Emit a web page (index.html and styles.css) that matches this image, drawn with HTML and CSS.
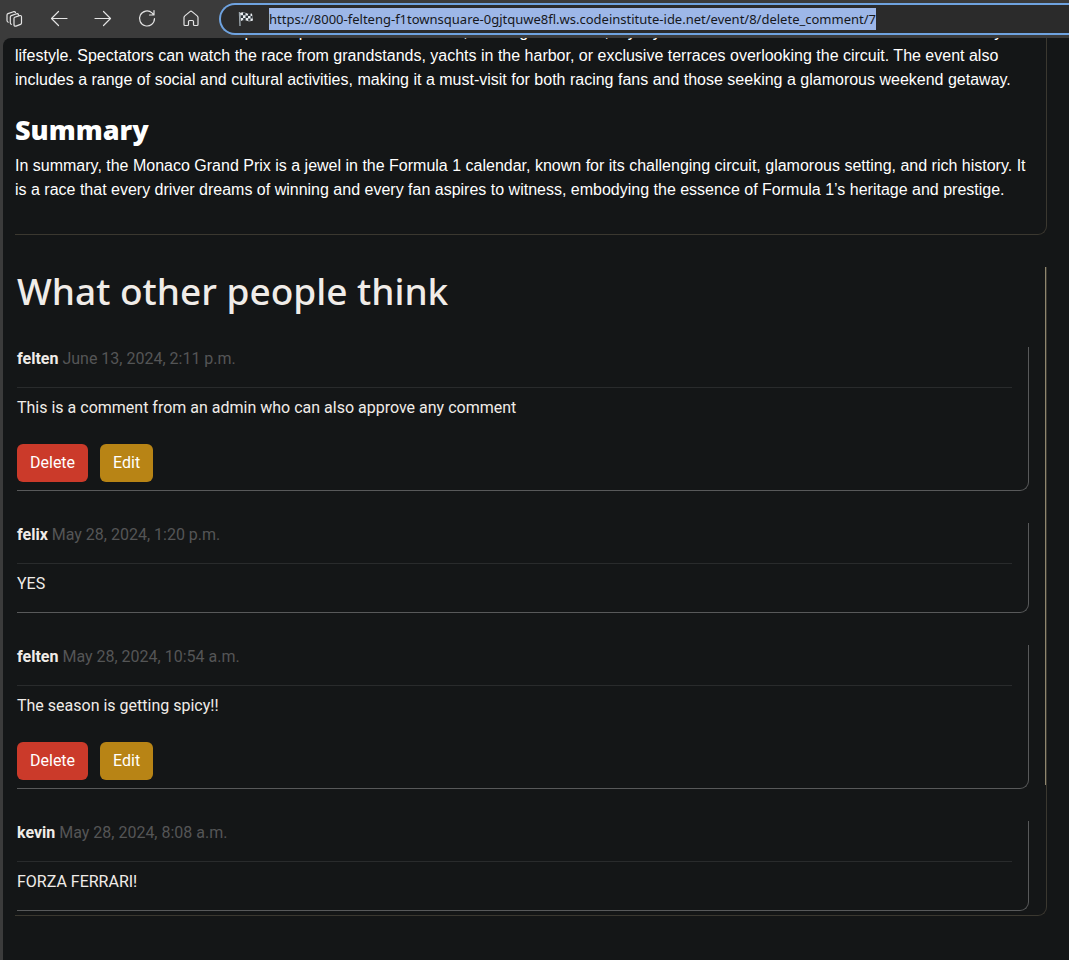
FILE: index.html
```html
<!DOCTYPE html>
<html lang="en">
<head>
<meta charset="utf-8">
<title>F1 Town Square</title>
<link rel="stylesheet" href="styles.css">
</head>
<body>
<header class="toolbar">
  <nav class="tools" aria-label="Browser">
    <button class="tool" type="button" aria-label="Workspaces"><svg viewBox="0 0 20 20"><path d="M9.700 8.300 14.500 6.600q2-.5 2 1.200v6.200q0 1-1 1.400l-4.500 1.700q-1.900.5-2-1.200V9.500q0-.9.700-1.200M6.300 15.400q-1-.4-1-1.600V8q0-1 1-1.400L11.500 4.800q1.500-.4 2 .900M3.200 13.200q-1.200-.5-1.200-1.700V6q0-1 1-1.400L8.500 2.700q1.500-.4 2 .8"/></svg></button>
    <button class="tool" type="button" aria-label="Back"><svg viewBox="0 0 20 20"><path d="M18 9.500H2.500M9.500 2.500l-7 7 7 7"/></svg></button>
    <button class="tool" type="button" aria-label="Forward"><svg viewBox="0 0 20 20"><path d="M2 9.500h15.500M10.500 2.500l7 7-7 7"/></svg></button>
    <button class="tool" type="button" aria-label="Reload"><svg viewBox="0 0 20 20"><path d="M17.500 9.500a7.500 7.500 0 1 1-2.500-5.600l1.500 1.600M17 1.500v4.500h-4.500"/></svg></button>
    <button class="tool" type="button" aria-label="Home"><svg viewBox="0 0 20 20"><path d="M3 8.500q0-1 .8-1.600L9 2.600q1-.8 2 0l5.200 4.300q.8.600.8 1.600v7q0 1-1 1h-2.500q-1 0-1-1v-3q0-1-1-1h-3q-1 0-1 1v3q0 1-1 1H4q-1 0-1-1z"/></svg></button>
  </nav>
  <div class="address">
    <svg class="flag" viewBox="0 0 16 16" aria-hidden="true"><path class="cloth" d="M2 2q3-1.500 6 0t6 .5l1 7q-3 1.500-6 .2T3 10z"/><path class="check" d="M5 1.400h2.500v2.800H5zM10 2.700h2.500v2.400H10zM2.800 4.300H5V7H2.800zM7.500 4.500H10V7H7.500zM12.500 5h2v2.400h-2zM5.200 7h2.500v2.300H5.200zM10.200 7.400h2.300v2.300h-2.300z"/><path class="pole" d="M1.500 1 2 15"/></svg>
    <input class="url" type="text" aria-label="Address" spellcheck="false" value="https://8000-felteng-f1townsquare-0gjtquwe8fl.ws.codeinstitute-ide.net/event/8/delete_comment/7">
  </div>
</header>
<main class="page">
  <article class="event">
    <p>The Monaco Grand Prix is an important part of the social scene, drawing celebrities, royalty and fans who come to share in the lavish luxury lifestyle. Spectators can watch the race from grandstands, yachts in the harbor, or exclusive terraces overlooking the circuit. The event also includes a range of social and cultural activities, making it a must-visit for both racing fans and those seeking a glamorous weekend getaway.</p>
    <h3 class="event-title">Summary</h3>
    <p>In summary, the Monaco Grand Prix is a jewel in the Formula 1 calendar, known for its challenging circuit, glamorous setting, and rich history. It is a race that every driver dreams of winning and every fan aspires to witness, embodying the essence of Formula 1’s heritage and prestige.</p>
  </article>
  <section class="comments">
    <h2 class="comments-title">What other people think</h2>
    <article class="comment">
      <div class="meta"><strong>felten</strong> <time>June 13, 2024, 2:11 p.m.</time></div>
      <p class="text">This is a comment from an admin who can also approve any comment</p>
      <div class="actions"><button class="btn delete" type="button">Delete</button><button class="btn edit" type="button">Edit</button></div>
    </article>
    <article class="comment">
      <div class="meta"><strong>felix</strong> <time>May 28, 2024, 1:20 p.m.</time></div>
      <p class="text">YES</p>
    </article>
    <article class="comment">
      <div class="meta"><strong>felten</strong> <time>May 28, 2024, 10:54 a.m.</time></div>
      <p class="text">The season is getting spicy!!</p>
      <div class="actions"><button class="btn delete" type="button">Delete</button><button class="btn edit" type="button">Edit</button></div>
    </article>
    <article class="comment">
      <div class="meta"><strong>kevin</strong> <time>May 28, 2024, 8:08 a.m.</time></div>
      <p class="text">FORZA FERRARI!</p>
    </article>
    <span class="thumb" aria-hidden="true"></span>
  </section>
</main>
<script src="main.js"></script>
</body>
</html>
```
FILE: main.js
```js
const url = document.querySelector('.url');
url.focus();
url.select();
```
FILE: styles.css
```css
* { box-sizing: border-box; }
body {
  margin: 0;
  min-height: 100vh;
  display: flex;
  flex-direction: column;
  background: #3b3b3b;
  color: #f0ece8;
  font: 16px/24px Roboto, sans-serif;
}
h2, h3, p { margin: 0; }
.toolbar {
  display: flex;
  height: 38px;
  align-items: center;
  padding-left: 5px;
}
.tools { display: flex; gap: 24px; padding-right: 18px; }
.tool { width: 20px; height: 20px; padding: 0; border: 0; background: none; }
.tool svg { display: block; width: 20px; height: 20px; fill: none; stroke: #e4e4e4; stroke-width: 1.2; stroke-linecap: round; stroke-linejoin: round; }
.address {
  flex: 1;
  display: flex;
  align-items: center;
  gap: 15px;
  height: 32px;
  padding-left: 17px;
  border: 2px solid #6fa3e0;
  border-right: 0;
  border-radius: 16px 0 0 16px;
  background: #2b2b2b;
}
.flag { width: 16px; height: 16px; }
.cloth { fill: #e9edf0; }
.check { fill: #30373c; }
.pole { stroke: #9aa4ab; stroke-width: 1.4; }
.url {
  flex: 1;
  min-width: 0;
  height: 22px;
  padding: 0;
  border: 0;
  outline: 0;
  background: none;
  color: #fff;
  font: 13px/22px "Noto Sans", sans-serif;
}
.url::selection { background: #9db7e8; color: #16181c; }
.page {
  flex: 1;
  margin-left: 3px;
  padding: 0 22px 44px 12px;
  overflow: hidden;
  background: #141617;
  border-top-left-radius: 8px;
}
.event {
  margin-top: -18px;
  padding: 0 16px 32px 0;
  border: solid #3b3830;
  border-width: 0 1px 1px 0;
  border-bottom-right-radius: 9px;
  color: #fff;
  font-family: "Liberation Sans", Arial, sans-serif;
}
.event-title {
  margin: 21px 0 7px;
  font: 800 27px/34px "Open Sans", sans-serif;
}
.comments {
  position: relative;
  margin-top: 32px;
  padding: 0 17px 4px 2px;
  border: solid #3b3830;
  border-width: 0 1px 1px 0;
  border-bottom-right-radius: 9px;
}
.comments-title {
  margin-bottom: 32px;
  font: 500 37px/48px "Noto Sans", sans-serif;
}
.thumb {
  position: absolute;
  top: 0;
  right: 0;
  width: 1px;
  height: 80%;
  background: #8f866e;
}
.comment {
  padding-right: 16px;
  border: solid #58595a;
  border-width: 0 1px 1px 0;
  border-bottom-right-radius: 9px;
}
.comment + .comment { margin-top: 32px; }
.meta { padding-bottom: 16px; border-bottom: 1px solid #292b2c; }
.meta strong { font-weight: 700; }
.meta time { color: #545556; }
.text { padding: 8px 0 16px; }
.actions { display: flex; gap: 12px; padding: 8px 0; }
.btn {
  height: 38px;
  padding: 0 13px;
  border: 0;
  border-radius: 6px;
  color: #fff;
  font: 16px/24px Roboto, sans-serif;
}
.delete { background: #cb3a2a; }
.edit { background: #b88415; }
```
